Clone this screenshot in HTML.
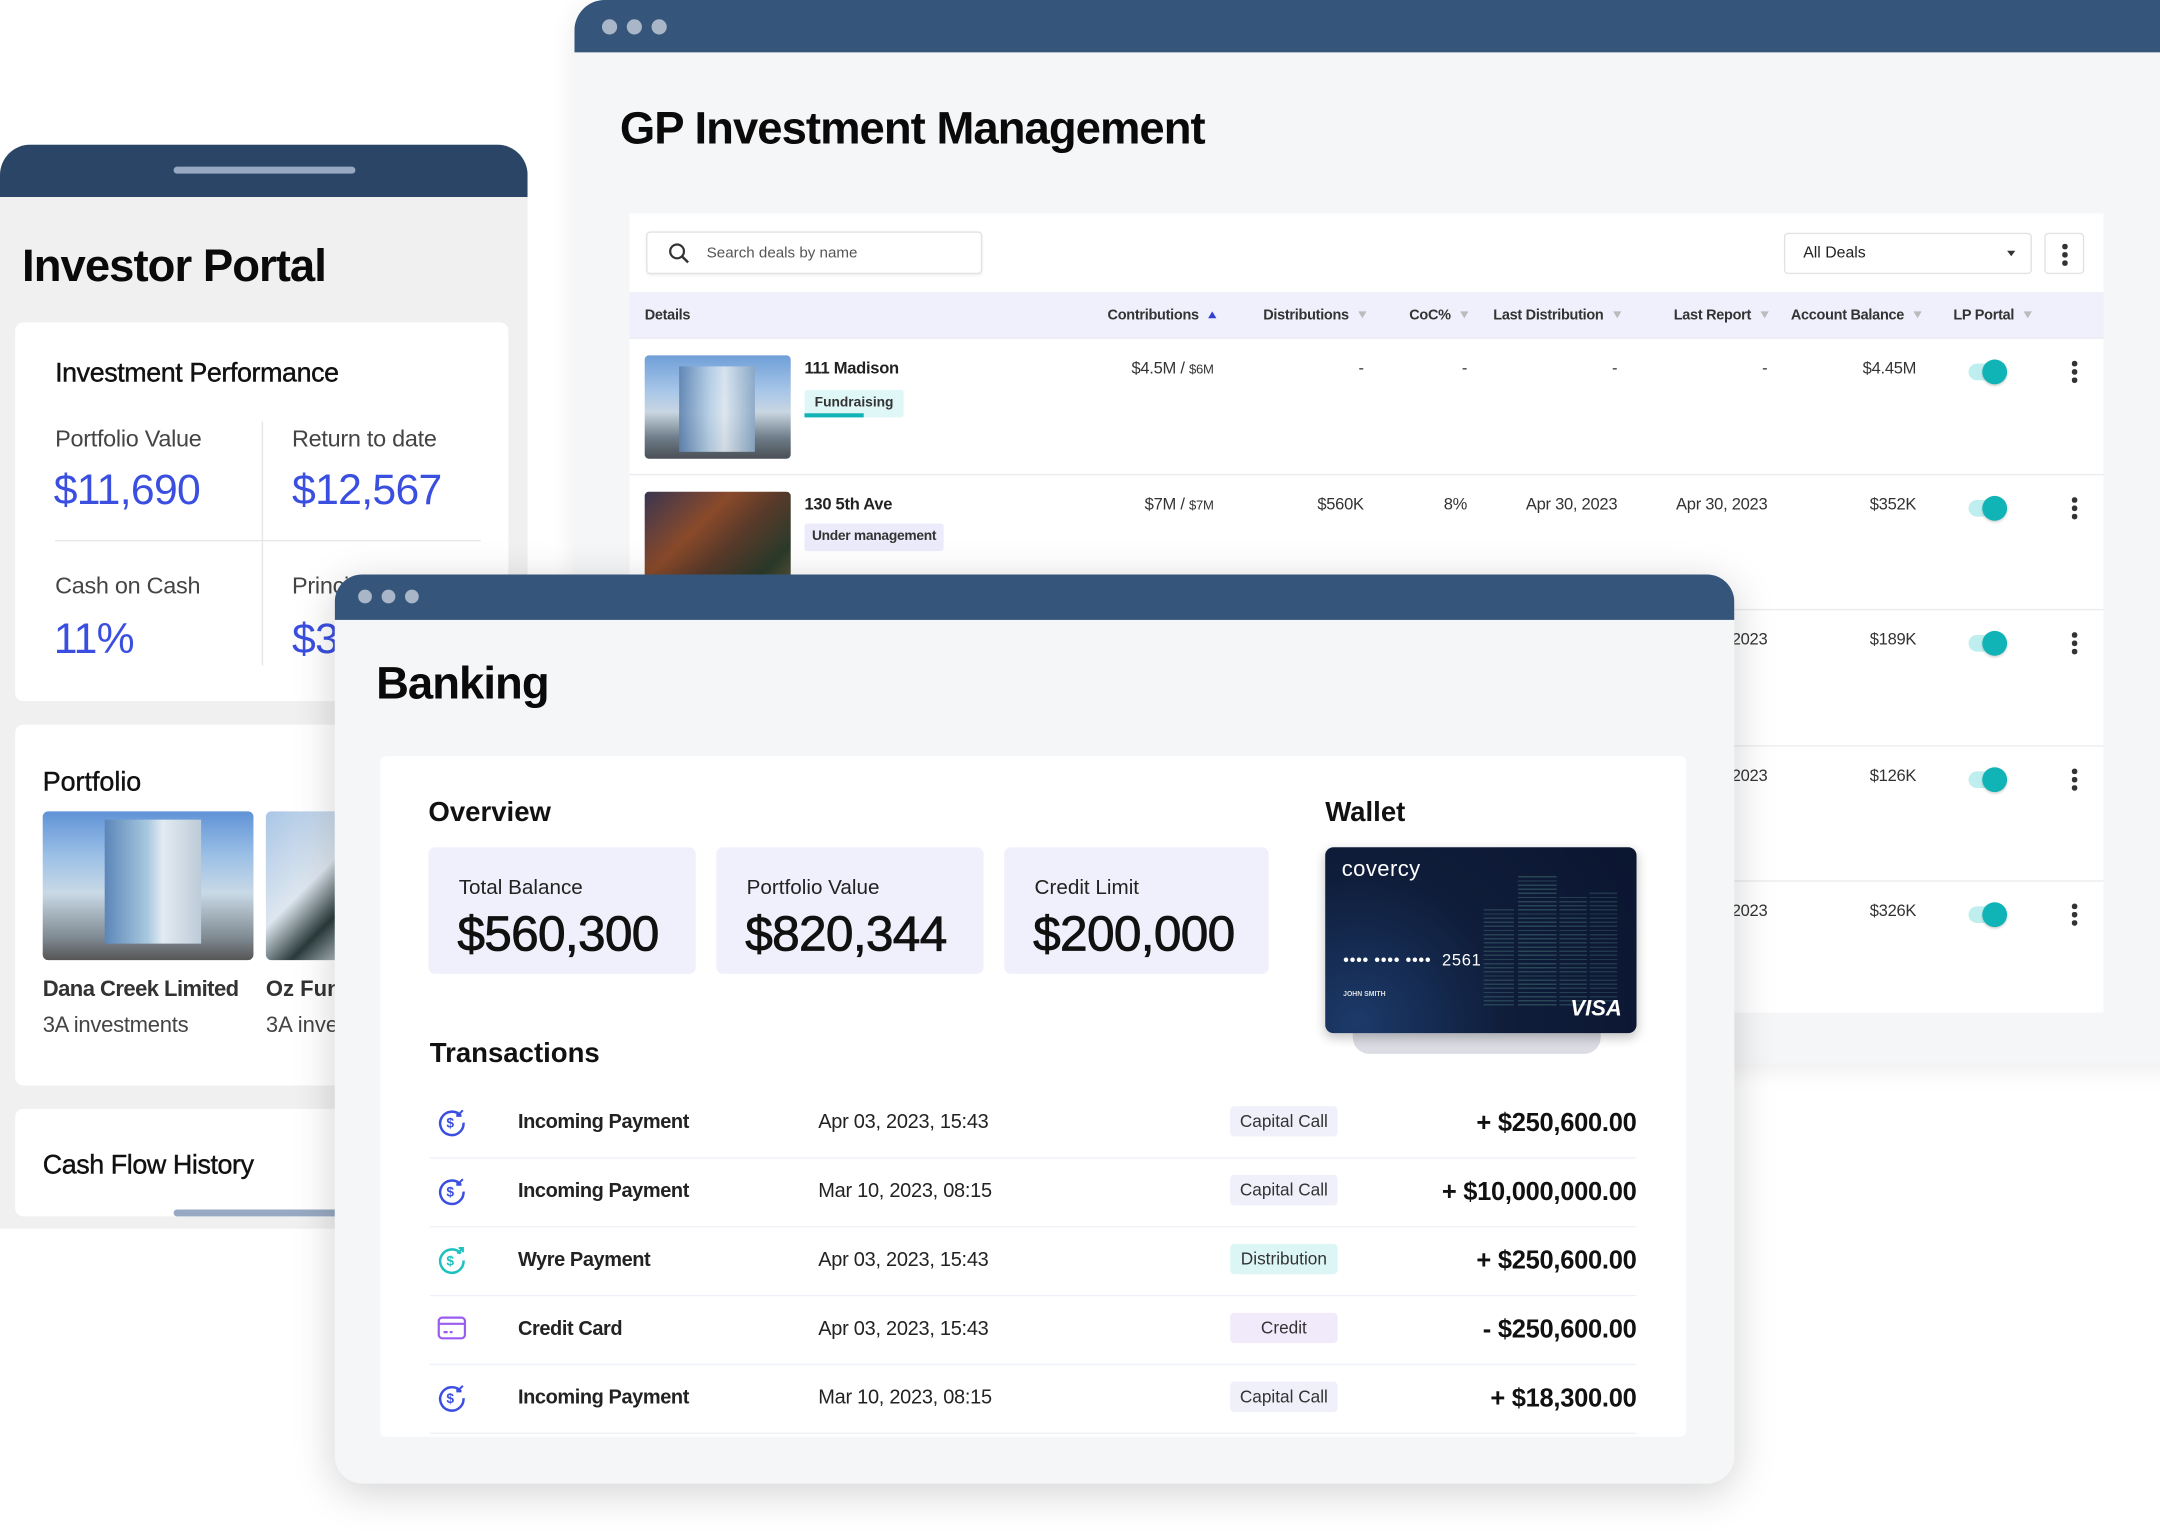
<!DOCTYPE html>
<html><head><meta charset="utf-8">
<style>
*{margin:0;padding:0;box-sizing:border-box}
html,body{width:2160px;height:1539px;overflow:hidden;background:#fff;font-family:"Liberation Sans",Arial,sans-serif;color:#111}
#w{position:absolute;left:0;top:0;width:1568px;height:1117px;transform:scale(1.37755);transform-origin:0 0}
.a{position:absolute}
.gp{left:417px;top:0;width:1200px;height:772px;background:#f5f6f8;border-radius:22px 0 0 22px;overflow:hidden;box-shadow:0 4px 20px rgba(0,0,0,.08)}
.bar{background:#35567a}
.dot{position:absolute;width:11px;height:11px;border-radius:50%;background:#a9b6c8}
.hd{font-size:10.5px;font-weight:bold;color:#333;top:223px;letter-spacing:-.2px}
.tri{display:inline-block;width:0;height:0;border-left:3.5px solid transparent;border-right:3.5px solid transparent;border-top:5px solid #bbb;margin-left:7px;vertical-align:1px}
.row{position:absolute;left:457px;width:1070px;height:98px;background:#fff;border-top:1px solid #ececf0}
.v{position:absolute;font-size:12px;color:#333;text-align:right;top:14px;letter-spacing:-.2px}
.tog{position:absolute;left:972px;top:18px;width:26px;height:12px;border-radius:6px;background:#bfeeee}
.tog i{position:absolute;right:-2px;top:-3px;width:18px;height:18px;border-radius:50%;background:#10b3b6;box-shadow:0 1px 2px rgba(0,0,0,.2)}
.keb{position:absolute;left:1047px;top:16px;width:4px}
.keb b{display:block;width:3.5px;height:3.5px;border-radius:50%;background:#333;margin-bottom:2.5px}
.ip{left:0;top:105px;width:383px;height:787px;background:#f0f0f0;border-radius:22px 22px 0 0;overflow:hidden}
.card{position:absolute;background:#fff;border-radius:6px}
.lbl{font-size:17px;color:#444;letter-spacing:-.2px}
.big{font-size:31px;color:#3a4fe0;letter-spacing:-.5px}
.bk{left:243px;top:417px;width:1016px;height:660px;background:#f5f6f8;border-radius:20px;overflow:hidden;box-shadow:0 6px 30px rgba(0,0,0,.18)}
.stat{position:absolute;top:198px;width:194px;height:92px;background:#eff0fb;border-radius:5px}
.stat span{position:absolute;left:22px;top:21px;font-size:15px;color:#222}
.stat b{position:absolute;left:21px;top:42px;font-size:36px;font-weight:normal;color:#111;letter-spacing:-.5px;-webkit-text-stroke:.6px #111}
.tr{position:absolute;left:69px;width:876px;height:50px;border-bottom:1.5px solid #eef2f8}
.tr .n{position:absolute;left:64px;top:16px;font-size:14.5px;font-weight:bold;color:#222;letter-spacing:-.3px}
.tr .d{position:absolute;left:282px;top:16px;font-size:14.5px;color:#222;letter-spacing:-.2px}
.tr .t{position:absolute;left:581px;top:12px;width:78px;height:22px;border-radius:3px;background:#f0f0fb;font-size:12.5px;color:#333;text-align:center;line-height:22px}
.tr .m{position:absolute;right:0;top:13px;font-size:18.5px;font-weight:bold;color:#111;letter-spacing:-.2px}
.tr svg{position:absolute;left:5px;top:12px}
.ttl{font-size:33px;font-weight:bold;color:#0a0a0a;letter-spacing:-.7px}
</style></head><body><div id="w">

<div class="a gp">
  <div class="a bar" style="left:0;top:0;width:1200px;height:38px"></div>
  <div class="dot" style="left:20px;top:14px"></div><div class="dot" style="left:38px;top:14px"></div><div class="dot" style="left:56px;top:14px"></div>
  <div class="a ttl" style="left:33px;top:74px">GP Investment Management</div>
</div>
<div class="a" style="left:457px;top:155px;width:1070px;height:580px;background:#fff"></div>
<div class="a" style="left:469px;top:168px;width:244px;height:31px;border:1px solid #e2e2e6;border-radius:3px;background:#fff;box-shadow:0 1px 2px rgba(0,0,0,.05)">
  <svg class="a" style="left:15px;top:7px" width="16" height="16" viewBox="0 0 16 16"><circle cx="6.5" cy="6.5" r="5" fill="none" stroke="#333" stroke-width="1.6"/><path d="M10 10l4.5 4.5" stroke="#333" stroke-width="1.8"/></svg>
  <span class="a" style="left:43px;top:9px;font-size:11px;color:#555">Search deals by name</span>
</div>
<div class="a" style="left:1295px;top:169px;width:180px;height:30px;border:1px solid #e2e2e6;border-radius:3px;background:#fff">
  <span class="a" style="left:13px;top:8px;font-size:11.5px;color:#222">All Deals</span>
  <span class="a" style="left:161px;top:12px;border-left:3px solid transparent;border-right:3px solid transparent;border-top:4px solid #333"></span>
</div>
<div class="a" style="left:1484px;top:169px;width:29px;height:30px;border:1px solid #e2e2e6;border-radius:3px;background:#fff">
  <div class="keb" style="left:12px;top:7px"><b></b><b></b><b></b></div>
</div>
<div class="a" style="left:457px;top:212px;width:1070px;height:33px;background:#eff0fb"></div>
<div class="a hd" style="left:468px">Details</div>
<div class="a hd" style="left:804px">Contributions<span class="tri" style="border-top:none;border-bottom:5px solid #3040d0"></span></div>
<div class="a hd" style="left:917px">Distributions<span class="tri"></span></div>
<div class="a hd" style="left:1023px">CoC%<span class="tri"></span></div>
<div class="a hd" style="left:1084px">Last Distribution<span class="tri"></span></div>
<div class="a hd" style="left:1215px">Last Report<span class="tri"></span></div>
<div class="a hd" style="left:1300px">Account Balance<span class="tri"></span></div>
<div class="a hd" style="left:1418px">LP Portal<span class="tri"></span></div>

<div class="row" style="top:245px">
  <div class="a" style="left:11px;top:12px;width:106px;height:75px;border-radius:3px;background:linear-gradient(180deg,#6f9fd8 0%,#a8c6e8 35%,#c9d6e2 55%,#6d7c88 80%,#4a4f55 100%)"><div class="a" style="left:25px;top:8px;width:55px;height:62px;background:linear-gradient(90deg,#5d82b0,#b8d0e6 40%,#dfe8f0 60%,#8aa7c4);opacity:.9"></div></div>
  <div class="a" style="left:127px;top:14px;font-size:12px;font-weight:bold;color:#222;letter-spacing:-.2px">111 Madison</div>
  <div class="a" style="left:127px;top:37px;width:72px;height:20px;background:#e0f7f7;border-radius:2px;font-size:10px;font-weight:bold;color:#333;text-align:center;line-height:19px">Fundraising<div class="a" style="left:0;bottom:0;width:43px;height:3px;background:#10b3b6"></div></div>
  <div class="v" style="right:646px">$4.5M / <small style="font-size:9.5px">$6M</small></div>
  <div class="v" style="right:537px">-</div><div class="v" style="right:462px">-</div><div class="v" style="right:353px">-</div><div class="v" style="right:244px">-</div>
  <div class="v" style="right:136px">$4.45M</div>
  <div class="tog"><i></i></div><div class="keb"><b></b><b></b><b></b></div>
</div>
<div class="row" style="top:344px">
  <div class="a" style="left:11px;top:12px;width:106px;height:75px;border-radius:3px;background:linear-gradient(135deg,#3a3550 0%,#8a4a2a 35%,#5a3a2a 55%,#2a3a2a 80%,#6a5a40 100%)"></div>
  <div class="a" style="left:127px;top:14px;font-size:12px;font-weight:bold;color:#222;letter-spacing:-.2px">130 5th Ave</div>
  <div class="a" style="left:127px;top:35px;width:101px;height:20px;background:#ebebfb;border-radius:2px;font-size:10px;font-weight:bold;color:#333;text-align:center;line-height:20px;letter-spacing:-.2px">Under management</div>
  <div class="v" style="right:646px">$7M / <small style="font-size:9.5px">$7M</small></div>
  <div class="v" style="right:537px">$560K</div><div class="v" style="right:462px">8%</div><div class="v" style="right:353px">Apr 30, 2023</div><div class="v" style="right:244px">Apr 30, 2023</div>
  <div class="v" style="right:136px">$352K</div>
  <div class="tog"><i></i></div><div class="keb"><b></b><b></b><b></b></div>
</div>
<div class="row" style="top:442px"><div class="v" style="right:244px">Apr 30, 2023</div><div class="v" style="right:136px">$189K</div><div class="tog"><i></i></div><div class="keb"><b></b><b></b><b></b></div></div>
<div class="row" style="top:541px"><div class="v" style="right:244px">Apr 30, 2023</div><div class="v" style="right:136px">$126K</div><div class="tog"><i></i></div><div class="keb"><b></b><b></b><b></b></div></div>
<div class="row" style="top:639px;height:96px"><div class="v" style="right:244px">Apr 30, 2023</div><div class="v" style="right:136px">$326K</div><div class="tog"><i></i></div><div class="keb"><b></b><b></b><b></b></div></div>

<div class="a ip">
  <div class="a" style="left:0;top:0;width:383px;height:38px;background:#2a4566"></div>
  <div class="a" style="left:126px;top:16px;width:132px;height:5px;border-radius:3px;background:#97a9c2"></div>
  <div class="a ttl" style="left:16px;top:69px">Investor Portal</div>
  <div class="card" style="left:11px;top:129px;width:358px;height:275px">
    <div class="a" style="left:29px;top:26px;font-size:19.5px;color:#111;letter-spacing:-.3px;-webkit-text-stroke:.3px #111">Investment Performance</div>
    <div class="a" style="left:179px;top:72px;width:1px;height:177px;background:#e6e6e6"></div>
    <div class="a" style="left:29px;top:158px;width:309px;height:1px;background:#e6e6e6"></div>
    <div class="a lbl" style="left:29px;top:75px">Portfolio Value</div>
    <div class="a big" style="left:28px;top:104px">$11,690</div>
    <div class="a lbl" style="left:201px;top:75px">Return to date</div>
    <div class="a big" style="left:201px;top:104px">$12,567</div>
    <div class="a lbl" style="left:29px;top:182px">Cash on Cash</div>
    <div class="a big" style="left:28px;top:212px">11%</div>
    <div class="a lbl" style="left:201px;top:182px">Principal</div>
    <div class="a big" style="left:201px;top:212px">$3,000</div>
  </div>
  <div class="card" style="left:11px;top:421px;width:360px;height:262px">
    <div class="a" style="left:20px;top:31px;font-size:19.5px;color:#111;-webkit-text-stroke:.3px #111">Portfolio</div>
    <div class="a" style="left:20px;top:63px;width:153px;height:108px;border-radius:4px;background:linear-gradient(180deg,#5f93d6 0%,#9cc0e6 30%,#c9d9e6 55%,#7f8a92 85%,#555 100%)"><div class="a" style="left:45px;top:6px;width:70px;height:90px;background:linear-gradient(90deg,#5c86b8,#a9c9e0 45%,#e3ebf2 60%,#bccbd8)"></div></div>
    <div class="a" style="left:182px;top:63px;width:60px;height:108px;border-radius:4px;background:linear-gradient(135deg,#a9c6e6,#dde6ef 50%,#2a3a3a 75%,#cfd9e3)"></div>
    <div class="a" style="left:20px;top:184px;font-size:16px;font-weight:bold;color:#333;letter-spacing:-.4px">Dana Creek Limited</div>
    <div class="a" style="left:20px;top:210px;font-size:16px;color:#444;letter-spacing:-.2px">3A investments</div>
    <div class="a" style="left:182px;top:184px;font-size:16px;font-weight:bold;color:#333">Oz Fund</div>
    <div class="a" style="left:182px;top:210px;font-size:16px;color:#444">3A investments</div>
  </div>
  <div class="card" style="left:11px;top:700px;width:360px;height:78px">
    <div class="a" style="left:20px;top:30px;font-size:19.5px;color:#111;letter-spacing:-.3px;-webkit-text-stroke:.3px #111">Cash Flow History</div>
    <div class="a" style="left:115px;top:73px;width:130px;height:5px;border-radius:3px;background:#97a9c2"></div>
  </div>
</div>

<div class="a bk">
  <div class="a" style="left:0;top:0;width:1016px;height:33px;background:#35567a"></div>
  <div class="dot" style="left:17px;top:11px;width:10px;height:10px"></div><div class="dot" style="left:34px;top:11px;width:10px;height:10px"></div><div class="dot" style="left:51px;top:11px;width:10px;height:10px"></div>
  <div class="a ttl" style="left:30px;top:60px">Banking</div>
  <div class="card" style="left:33px;top:132px;width:948px;height:494px;border-radius:4px">
    <div class="a" style="left:35px;top:30px;font-size:20px;font-weight:bold;color:#111">Overview</div>
    <div class="stat" style="left:35px;top:66px"><span>Total Balance</span><b>$560,300</b></div>
    <div class="stat" style="left:244px;top:66px"><span>Portfolio Value</span><b>$820,344</b></div>
    <div class="stat" style="left:453px;top:66px;width:192px"><span>Credit Limit</span><b>$200,000</b></div>
    <div class="a" style="left:686px;top:30px;font-size:20px;font-weight:bold;color:#111">Wallet</div>
    <div class="a" style="left:706px;top:186px;width:180px;height:30px;border-radius:0 0 12px 12px;background:#dcdce4"></div>
    <div class="a" style="left:686px;top:66px;width:226px;height:135px;border-radius:6px;background:radial-gradient(circle at 10% 95%,#1c3a6a 0%,#0f1d3a 45%,#0b1530 100%);box-shadow:0 3px 8px rgba(0,0,0,.25);overflow:hidden">
      <div class="a" style="left:140px;top:20px;width:28px;height:95px;background:repeating-linear-gradient(0deg,rgba(90,150,140,.35) 0 1px,transparent 1px 3px)"></div>
      <div class="a" style="left:115px;top:45px;width:22px;height:70px;background:repeating-linear-gradient(0deg,rgba(90,150,140,.3) 0 1px,transparent 1px 3px)"></div>
      <div class="a" style="left:170px;top:35px;width:20px;height:80px;background:repeating-linear-gradient(0deg,rgba(90,150,140,.3) 0 1px,transparent 1px 3px)"></div>
      <div class="a" style="left:192px;top:32px;width:20px;height:80px;background:repeating-linear-gradient(0deg,rgba(90,150,140,.25) 0 1px,transparent 1px 3px)"></div>
      <div class="a" style="left:12px;top:8px;font-size:16px;color:#fff;letter-spacing:.3px">covercy</div>
      <div class="a" style="left:13px;top:75px;font-size:12px;color:#fff;letter-spacing:.5px">•••• •••• •••• &nbsp;2561</div>
      <div class="a" style="left:13px;top:104px;font-size:5px;color:#ddd;font-weight:bold">JOHN SMITH</div>
      <div class="a" style="left:178px;top:109px;font-size:16px;color:#fff;font-weight:bold;font-style:italic">VISA</div>
    </div>
    <div class="a" style="left:36px;top:205px;font-size:20px;font-weight:bold;color:#111">Transactions</div>
    <div class="tr" style="top:242px;left:36px;width:876px"><svg width="22" height="22" viewBox="0 0 22 22"><path d="M17.5 7A8.5 8.5 0 1 0 19.5 12" fill="none" stroke="#3a4fe0" stroke-width="1.8"/><path d="M19 3l-4 4M15 4v3h3" fill="none" stroke="#3a4fe0" stroke-width="1.5"/><text x="7" y="15.5" font-size="10" font-weight="bold" fill="#3a4fe0" font-family="Liberation Sans">$</text></svg><span class="n">Incoming Payment</span><span class="d">Apr 03, 2023, 15:43</span><span class="t">Capital Call</span><span class="m">+ $250,600.00</span></div>
    <div class="tr" style="top:292px;left:36px;width:876px"><svg width="22" height="22" viewBox="0 0 22 22"><path d="M17.5 7A8.5 8.5 0 1 0 19.5 12" fill="none" stroke="#3a4fe0" stroke-width="1.8"/><path d="M19 3l-4 4M15 4v3h3" fill="none" stroke="#3a4fe0" stroke-width="1.5"/><text x="7" y="15.5" font-size="10" font-weight="bold" fill="#3a4fe0" font-family="Liberation Sans">$</text></svg><span class="n">Incoming Payment</span><span class="d">Mar 10, 2023, 08:15</span><span class="t">Capital Call</span><span class="m">+ $10,000,000.00</span></div>
    <div class="tr" style="top:342px;left:36px;width:876px"><svg width="22" height="22" viewBox="0 0 22 22"><path d="M17.5 7A8.5 8.5 0 1 0 19.5 12" fill="none" stroke="#1fc0c0" stroke-width="1.8"/><path d="M15 7l4-4M16 3h3v3" fill="none" stroke="#1fc0c0" stroke-width="1.5"/><text x="7" y="15.5" font-size="10" font-weight="bold" fill="#1fc0c0" font-family="Liberation Sans">$</text></svg><span class="n">Wyre Payment</span><span class="d">Apr 03, 2023, 15:43</span><span class="t" style="background:#dcf6f5">Distribution</span><span class="m">+ $250,600.00</span></div>
    <div class="tr" style="top:392px;left:36px;width:876px"><svg width="22" height="22" viewBox="0 0 22 22"><rect x="1.5" y="3.5" width="19" height="15" rx="2.5" fill="none" stroke="#9a5cf0" stroke-width="1.6"/><path d="M1.5 8h19M5 14h3M9.5 14h2" stroke="#9a5cf0" stroke-width="1.6"/></svg><span class="n">Credit Card</span><span class="d">Apr 03, 2023, 15:43</span><span class="t" style="background:#f1eafb">Credit</span><span class="m">- $250,600.00</span></div>
    <div class="tr" style="top:442px;left:36px;width:876px"><svg width="22" height="22" viewBox="0 0 22 22"><path d="M17.5 7A8.5 8.5 0 1 0 19.5 12" fill="none" stroke="#3a4fe0" stroke-width="1.8"/><path d="M19 3l-4 4M15 4v3h3" fill="none" stroke="#3a4fe0" stroke-width="1.5"/><text x="7" y="15.5" font-size="10" font-weight="bold" fill="#3a4fe0" font-family="Liberation Sans">$</text></svg><span class="n">Incoming Payment</span><span class="d">Mar 10, 2023, 08:15</span><span class="t">Capital Call</span><span class="m">+ $18,300.00</span></div>
  </div>
</div>

</div></body></html>
